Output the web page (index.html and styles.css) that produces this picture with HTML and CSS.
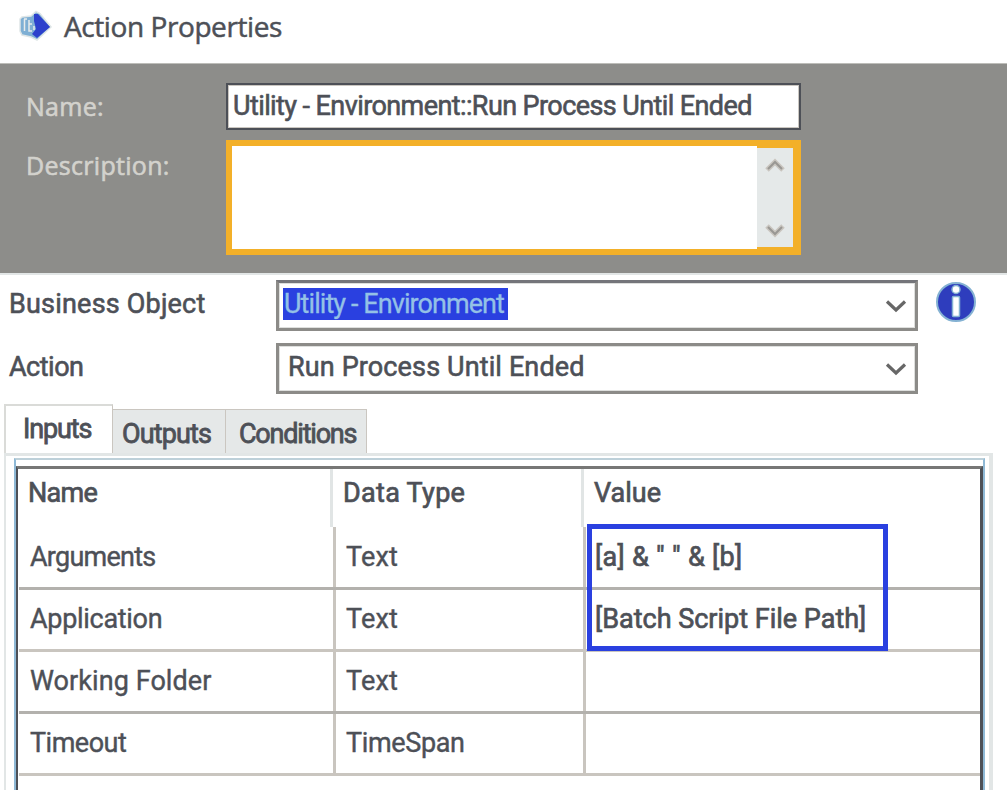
FILE: index.html
```html
<!DOCTYPE html>
<html lang="en">
<head>
<meta charset="utf-8">
<title>Action Properties</title>
<link rel="stylesheet" href="styles.css">
</head>
<body>
<div class="window">
  <header class="titlebar">
    <svg class="logo" width="34" height="32" viewBox="0 0 34 32">
      <path d="M3 7L12 6 17 1.5 21 3.5 32 17 18 30 12 27 3 25 1 21V9Z" fill="#7eafd4" stroke="#dfe6e7" stroke-width="1.5"/>
      <path d="M15 4L19 4 31 17 18 28 13 24 17 19 15 11Z" fill="#2c40cc"/>
      <path d="M5.5 9V21M5 9H8M10 10V21H13M10 14H13M15 16V20" fill="none" stroke="#e6ebeb" stroke-width="1.5"/>
    </svg>
    <h1 class="title"><span class="t-title">Action Properties</span></h1>
  </header>
  <section class="summary">
    <label class="caption"><span class="t-name">Name:</span></label>
    <div class="textbox"><span class="t-process">Utility - Environment::Run Process Until Ended</span></div>
    <label class="caption desc-caption"><span class="t-desc">Description:</span></label>
    <div class="description">
      <div class="scrollbar">
        <svg width="20" height="16" viewBox="0 0 20 16"><path d="M2 13L10 5 18 13" fill="none" stroke="#c9c5bf" stroke-width="5"/><path d="M3 12L10 5 17 12" fill="none" stroke="#999793" stroke-width="2"/></svg>
        <svg width="20" height="16" viewBox="0 0 20 16"><path d="M2 3L10 11 18 3" fill="none" stroke="#c9c5bf" stroke-width="5"/><path d="M3 4L10 11 17 4" fill="none" stroke="#999793" stroke-width="2"/></svg>
      </div>
    </div>
  </section>
  <section class="pickers">
    <label class="label"><span class="t-object">Business Object</span></label>
    <div class="combo">
      <span class="selected"><span class="t-env">Utility - Environment</span></span>
      <svg class="chevron" width="22" height="15" viewBox="0 0 22 15"><path d="M2 2.5L11 11 20 2.5" fill="none" stroke="#676767" stroke-width="3.2"/></svg>
    </div>
    <svg class="info" width="42" height="42" viewBox="0 0 42 42">
      <circle cx="21" cy="21" r="19" fill="#2e3dbd" stroke="#85b2d3" stroke-width="2"/>
      <circle cx="21" cy="8.5" r="4" fill="#fff" stroke="#85b2d3" stroke-width="1.5"/>
      <rect x="17.5" y="15.5" width="7" height="20" rx="1" fill="#fff" stroke="#85b2d3" stroke-width="1.5"/>
    </svg>
    <label class="label"><span class="t-action">Action</span></label>
    <div class="combo second">
      <span class="t-run">Run Process Until Ended</span>
      <svg class="chevron" width="22" height="15" viewBox="0 0 22 15"><path d="M2 2.5L11 11 20 2.5" fill="none" stroke="#676767" stroke-width="3.2"/></svg>
    </div>
  </section>
  <nav class="tabs">
    <div class="tab active"><span class="t-inputs">Inputs</span></div>
    <div class="tab"><span class="t-outputs">Outputs</span></div>
    <div class="tab last"><span class="t-conditions">Conditions</span></div>
  </nav>
  <main class="panel">
    <div class="frame">
      <div class="grid">
        <div class="row head"><div class="cell"><span class="t-hname">Name</span></div><div class="cell"><span class="t-type">Data Type</span></div><div class="cell"><span class="t-value">Value</span></div></div>
        <div class="row line-dark"><div class="cell"><span class="t-arguments">Arguments</span></div><div class="cell"><span class="t-text">Text</span></div><div class="cell strong"><span class="t-ab">[a] &amp; " " &amp; [b]</span></div></div>
        <div class="row"><div class="cell"><span class="t-application">Application</span></div><div class="cell"><span class="t-text">Text</span></div><div class="cell strong"><span class="t-batch">[Batch Script File Path]</span></div></div>
        <div class="row line-dark"><div class="cell"><span class="t-folder">Working Folder</span></div><div class="cell"><span class="t-text">Text</span></div><div class="cell"></div></div>
        <div class="row"><div class="cell"><span class="t-timeout">Timeout</span></div><div class="cell"><span class="t-span">TimeSpan</span></div><div class="cell"></div></div>
        <div class="highlight"></div>
      </div>
    </div>
  </main>
</div>
</body>
</html>
```
FILE: styles.css
```css
* { box-sizing: border-box; }
body { margin: 0; background: #fff; }
.window {
  width: 1007px; height: 790px; overflow: hidden;
  display: flex; flex-direction: column;
  font: 27px/32px Roboto, "Liberation Sans", sans-serif;
  color: #4d5057; white-space: nowrap;
  -webkit-text-stroke: 0.6px currentColor;
}
svg { display: block; flex: none; }

.titlebar { height: 63px; flex: none; display: flex; align-items: flex-start; padding: 10px 0 0 19px; }
.title { margin: 0 0 0 11px; font: 28px/32px "Open Sans", "Noto Sans", sans-serif; -webkit-text-stroke: 0.5px; }

.summary {
  height: 210px; flex: none; background: #8d8d8a; border-top: 1px solid #bdbdb9;
  display: grid; grid-template-columns: 201px 575px; grid-template-rows: 47px 115px;
  row-gap: 10px; padding: 19px 0 0 25px;
}
.caption { color: #d3d2cd; padding: 7px 0 0 1px; font-family: "Open Sans", sans-serif; font-size: 25px; }
.desc-caption { padding-top: 9px; }
.textbox { background: #fff; border: 2px solid #4d5057; box-shadow: inset 0 0 0 1px #cbc7c1; padding: 5px 0 0 5px; }
.description { background: #fff; border: 6px solid #f3b029; border-right-width: 8px; display: flex; justify-content: flex-end; }
.scrollbar {
  width: 36px; background: #e5e9e9; border: solid #f3b029; border-width: 2px 0;
  display: flex; flex-direction: column; align-items: center; justify-content: space-between; padding: 9px 0 8px;
}

.pickers {
  height: 131px; flex: none; border-top: 2px solid #e2e6e6;
  display: grid; grid-template-columns: 267px 642px 42px; grid-template-rows: 51px 51px;
  row-gap: 12px; padding: 5px 0 0 9px;
}
.label { padding-top: 8px; }
.combo { border: 3px solid #8c8b88; border-top-color: #74757a; display: flex; align-items: flex-start; padding: 5px 8px 0 4px; background: #fff; box-shadow: inset 0 0 0 1px #dedfdd; }
.combo.second { padding-left: 9px; border-top-color: #8c8b88; }
.selected { background: #2a40e0; color: #94c1e6; width: 225px; height: 32px; padding-left: 1px; -webkit-text-stroke: 0.3px; }
.chevron { margin: 11px 0 0 auto; }
.info { margin: 1px 0 0 17px; }

.tabs { height: 50px; flex: none; display: flex; align-items: flex-end; padding-left: 4px; }
.tab { height: 45px; width: 113px; background: #e5e8e8; border: 1px solid #cac6c0; border-left: 0; padding: 8px 0 0 9px; -webkit-text-stroke: 0.8px; }
.tab.last { width: 141px; padding-left: 13px; }
.tab.active { width: 109px; height: 50px; background: #fff; border: 2px solid #dadbd8; border-bottom: 0; border-right: 1px solid #cac6c0; padding: 7px 0 0 17px; }

.panel { height: 340px; flex: none; width: 989px; margin: -1px 0 0 4px; border: solid #e2e6e6; border-width: 3px 4px 0 2px; padding: 2px 4px 0 8px; }
.frame { border: solid #8fb9d6; border-width: 2px 2px 0 2px; border-top-color: #bdd0d9; height: 400px; padding-top: 6px; }
.grid { border: 3px solid #4d5057; border-width: 3px 3px 0 2px; border-top-color: #777776; height: 390px; position: relative; padding-left: 1px; }
.row { display: grid; grid-template-columns: 317px 250px 1fr; height: 62px; border-bottom: 3px solid #c9c5bf; }
.row.line-dark { border-bottom-color: #b3b1ad; }
.row.line-dark:nth-child(2) { height: 63px; }
.row.head { height: 58px; grid-template-columns: 314px 251px 1fr; border: 0; }
.cell { border-right: 3px solid #c9c5bf; padding: 13px 0 0 11px; -webkit-text-stroke: 0.4px; }
.row:nth-child(2) .cell { padding-top: 14px; }
.cell + .cell { padding-left: 10px; }
.cell:last-child { border-right: 0; padding-left: 9px; }
.head .cell { border-color: #e1e5e5; padding-top: 8px; padding-left: 9px; -webkit-text-stroke: 0.7px; }
.head .cell + .cell { padding-left: 10px; }
.cell.strong { -webkit-text-stroke: 0.7px; }
.highlight { position: absolute; left: 569px; top: 55px; width: 301px; height: 127px; border: 5px solid #2a40e0; }

/* Tracking of each string */
.t-title { letter-spacing: -0.42px; }
.t-name, .t-desc { letter-spacing: 0.3px; }
.t-process { letter-spacing: -0.59px; }
.t-object { letter-spacing: 0.2px; }
.t-env { letter-spacing: -0.92px; }
.t-action { letter-spacing: -0.5px; }
.t-run { letter-spacing: 0.13px; }
.t-inputs { letter-spacing: -1.15px; }
.t-outputs { letter-spacing: -0.85px; }
.t-conditions { letter-spacing: -1.2px; }
.t-hname { letter-spacing: -0.7px; }
.t-type { letter-spacing: 0.3px; }
.t-arguments { letter-spacing: -0.75px; }
.t-application { letter-spacing: -0.3px; }
.t-folder { letter-spacing: 0.07px; }
.t-timeout { letter-spacing: -0.5px; }
.t-text { letter-spacing: 0.2px; }
.t-span { letter-spacing: -0.35px; }
.t-ab { letter-spacing: 0.3px; }
```
